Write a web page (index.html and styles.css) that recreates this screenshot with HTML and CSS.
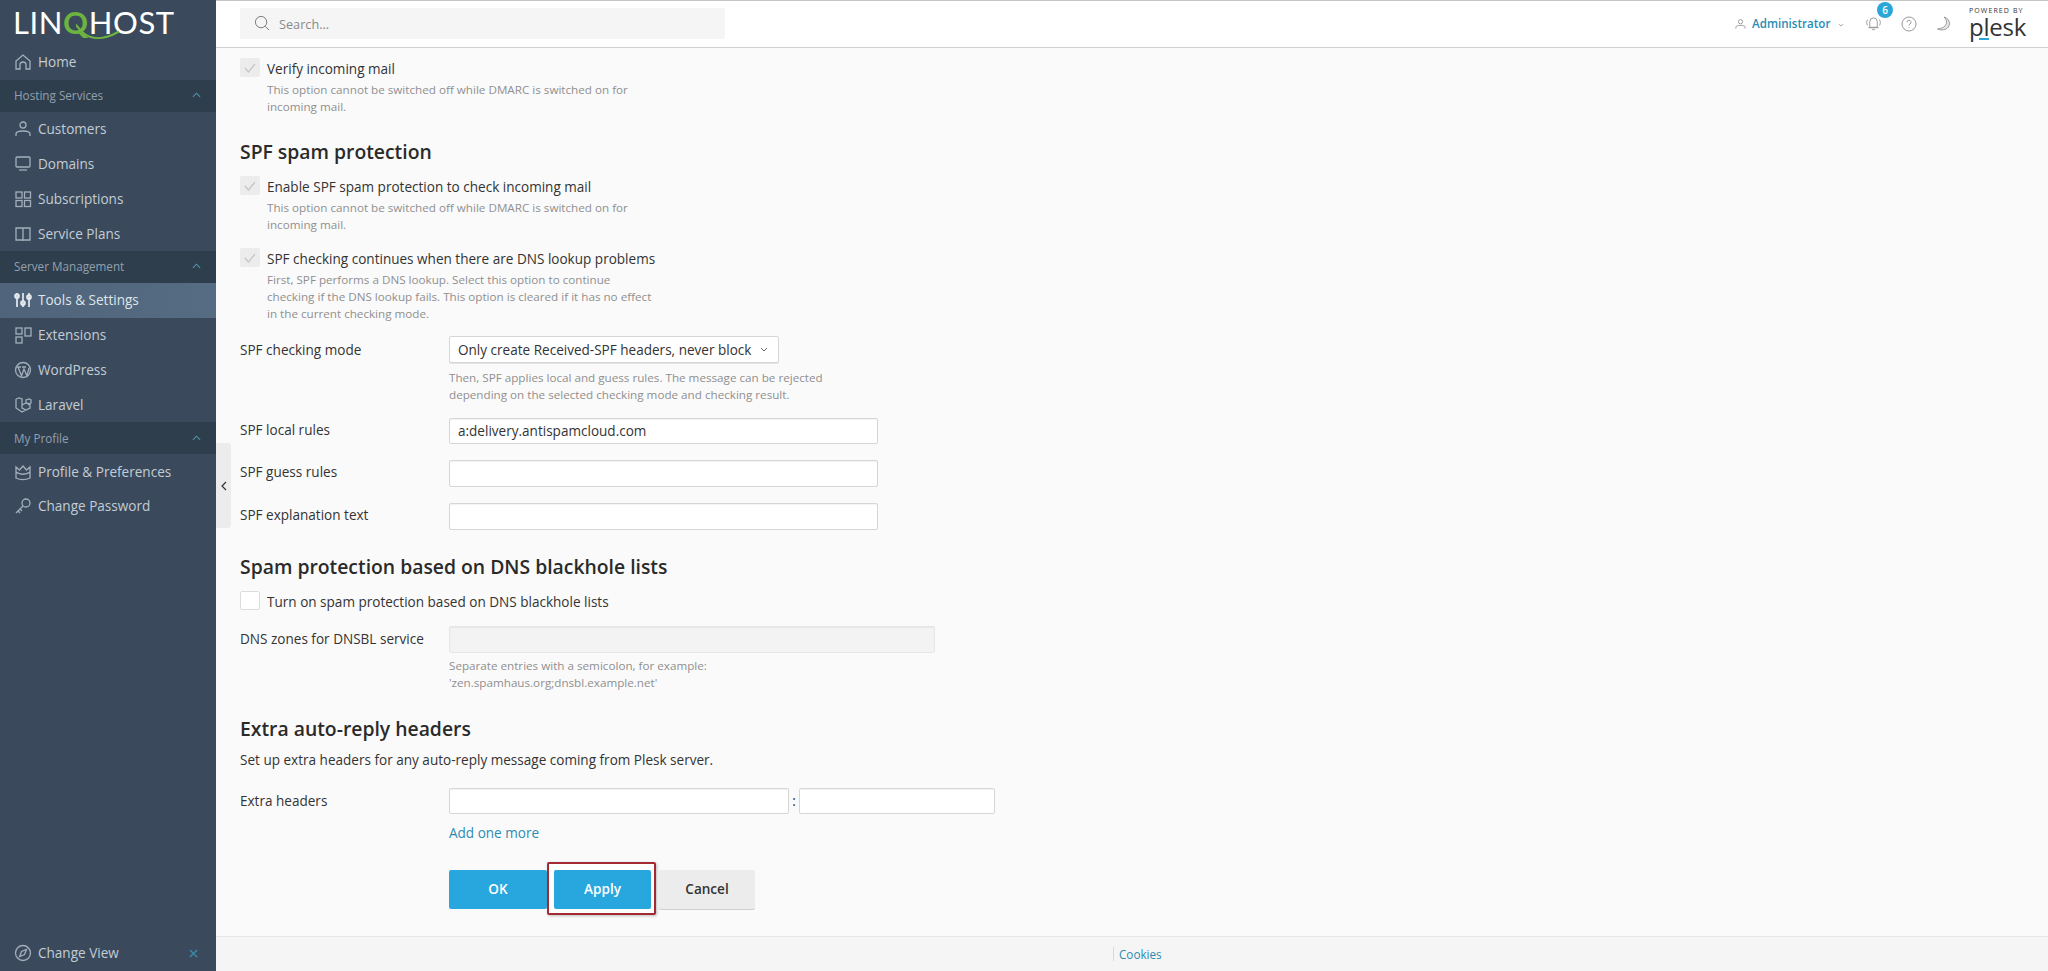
FILE: index.html
```html
<!DOCTYPE html>
<html lang="en">
<head>
<meta charset="utf-8">
<title>Mail Server Settings</title>
<link rel="stylesheet" href="styles.css">
</head>
<body>
<aside class="sidebar">
  <div class="logo">
    <span>LIN</span><span class="logo-q">Q</span><span>HOST</span>
    <svg class="logo-swoosh" viewBox="0 0 60 18" width="60" height="18"><path d="M0 2l6 7c9 8 22 8 36 0" fill="none" stroke="#6db33f" stroke-width="2.200" stroke-linecap="round"/></svg>
  </div>
  <nav class="nav">
    <a class="nav-item"><svg class="nav-icon" viewBox="0 0 18 18"><path d="M2 8l7-6 7 6v8h-4v-4a3 3 0 0 0-6 0v4H2z"/></svg>Home</a>
    <div class="nav-head">Hosting Services<svg class="nav-caret" viewBox="0 0 10 6"><path d="M1 5l4-4 4 4"/></svg></div>
    <a class="nav-item"><svg class="nav-icon" viewBox="0 0 18 18"><circle cx="9" cy="5" r="3"/><path d="M2 16v-2c0-2 3-3 7-3s7 1 7 3v2"/></svg>Customers</a>
    <a class="nav-item"><svg class="nav-icon" viewBox="0 0 18 18"><rect x="2" y="2" width="14" height="10" rx="1"/><path d="M5 15h8"/></svg>Domains</a>
    <a class="nav-item"><svg class="nav-icon" viewBox="0 0 18 18"><rect x="2" y="2" width="6" height="6"/><rect x="10.500" y="2" width="6" height="6"/><rect x="2" y="10.500" width="6" height="6"/><rect x="10.500" y="10.500" width="6" height="6"/></svg>Subscriptions</a>
    <a class="nav-item"><svg class="nav-icon" viewBox="0 0 18 18"><path d="M2 3h14v12H2zM9 3v13"/></svg>Service Plans</a>
    <div class="nav-head">Server Management<svg class="nav-caret" viewBox="0 0 10 6"><path d="M1 5l4-4 4 4"/></svg></div>
    <a class="nav-item nav-active"><svg class="nav-icon" viewBox="0 0 18 18"><path d="M3 2v14M9 2v14M15 2v14"/><circle cx="3" cy="5" r="2"/><circle cx="9" cy="12" r="2"/><circle cx="15" cy="6" r="2"/></svg>Tools &amp; Settings</a>
    <a class="nav-item"><svg class="nav-icon" viewBox="0 0 18 18"><rect x="2" y="2" width="6" height="6"/><rect x="11" y="2" width="6" height="8"/><rect x="2" y="11" width="6" height="6"/></svg>Extensions</a>
    <a class="nav-item"><svg class="nav-icon" viewBox="0 0 18 18"><circle cx="9" cy="9" r="7.500"/><path d="M4 6l3.500 9L10 8l3 7 2-8M3 6h4M8 6h4"/></svg>WordPress</a>
    <a class="nav-item"><svg class="nav-icon" viewBox="0 0 18 18"><path d="M2 3l3-1 3 1v9l4 2 4-2V8M8 9l4-2 4 1M12 7V4l3-1 2 1v3l-3 2M2 3v9l6 4 4-2"/></svg>Laravel</a>
    <div class="nav-head">My Profile<svg class="nav-caret" viewBox="0 0 10 6"><path d="M1 5l4-4 4 4"/></svg></div>
    <a class="nav-item"><svg class="nav-icon" viewBox="0 0 18 18"><path d="M2 4l3.500 3L9 3l3.500 4L16 4v11c-4 2-10 2-14 0zM2 9c4 3 10 3 14 0"/></svg>Profile &amp; Preferences</a>
    <a class="nav-item"><svg class="nav-icon" viewBox="0 0 18 18"><circle cx="12" cy="6" r="4"/><path d="M9 9l-7 7M4 14l2 2M6 12l2 2"/></svg>Change Password</a>
  </nav>
  <a class="nav-item nav-foot"><svg class="nav-icon" viewBox="0 0 18 18"><circle cx="9" cy="9" r="7.500"/><path d="M12.500 5.500L10.500 10.500 5.500 12.500 7.500 7.500z"/></svg>Change View<svg class="nav-close" viewBox="0 0 10 10"><path d="M1 1l8 8M9 1l-8 8"/></svg></a>
</aside>
<div class="main">
  <header class="topbar">
    <div class="search">
      <svg class="search-icon" viewBox="0 0 18 18"><circle cx="7.500" cy="7.500" r="6"/><path d="M12 12l4 4"/></svg>
      <span>Search...</span>
    </div>
    <div class="top-right">
      <svg class="user-icon" viewBox="0 0 12 12"><circle cx="6" cy="3.500" r="2.300"/><path d="M1 11V9.500C1 8 3 7.500 6 7.500s5 .5 5 2V11"/></svg>
      <a class="admin">Administrator</a>
      <svg class="admin-caret" viewBox="0 0 8 5"><path d="M1 1l3 3 3-3"/></svg>
      <div class="bell">
        <svg viewBox="0 0 18 16"><path d="M5 12V6a4 4 0 0 1 8 0v6zM3.500 12.500h11M7.500 14.500h3M2.500 4c-1 2-1 4 0 6M15.500 4c1 2 1 4 0 6"/></svg>
        <span class="badge">6</span>
      </div>
      <svg class="help" viewBox="0 0 16 16"><circle cx="8" cy="8" r="7"/><path d="M6 6.300a2 2 0 1 1 3 1.700c-.7.400-1 .8-1 1.500M8 11.300v.8"/></svg>
      <svg class="moon" viewBox="0 0 14 15"><path d="M8 1C12.500 5 11.500 12 1.500 13 7 15.500 13.500 13 13.500 7.500 13.500 4 11 2 8 1z"/></svg>
      <div class="plesk">
        <span class="plesk-by">POWERED BY</span>
        <span class="plesk-name">plesk</span>
      </div>
    </div>
  </header>
  <main class="content">
    <button class="collapse" type="button"><svg viewBox="0 0 6 10"><path d="M5 1L1 5l4 4"/></svg></button>
    <label class="check first"><span class="box on"><svg viewBox="0 0 12 10"><path d="M1 5l3.500 4L11 1"/></svg></span>Verify incoming mail</label>
    <p class="hint hint-check">This option cannot be switched off while DMARC is switched on for<br>incoming mail.</p>
    <h2 class="h h-spf">SPF spam protection</h2>
    <label class="check c-enable"><span class="box on"><svg viewBox="0 0 12 10"><path d="M1 5l3.500 4L11 1"/></svg></span>Enable SPF spam protection to check incoming mail</label>
    <p class="hint hint-check">This option cannot be switched off while DMARC is switched on for<br>incoming mail.</p>
    <label class="check c-continue"><span class="box on"><svg viewBox="0 0 12 10"><path d="M1 5l3.500 4L11 1"/></svg></span>SPF checking continues when there are DNS lookup problems</label>
    <p class="hint hint-check">First, SPF performs a DNS lookup. Select this option to continue<br>checking if the DNS lookup fails. This option is cleared if it has no effect<br>in the current checking mode.</p>
    <div class="row r-mode">
      <span class="lab">SPF checking mode</span>
      <div class="select">Only create Received-SPF headers, never block<svg viewBox="0 0 8 5"><path d="M1 1l3 3 3-3"/></svg></div>
    </div>
    <p class="hint hint-field">Then, SPF applies local and guess rules. The message can be rejected<br>depending on the selected checking mode and checking result.</p>
    <div class="row r-local"><span class="lab">SPF local rules</span><div class="input w-430">a:delivery.antispamcloud.com</div></div>
    <div class="row r-next"><span class="lab">SPF guess rules</span><div class="input w-430"></div></div>
    <div class="row r-next"><span class="lab">SPF explanation text</span><div class="input w-430"></div></div>
    <h2 class="h h-dns">Spam protection based on DNS blackhole lists</h2>
    <label class="check c-dns"><span class="box"></span>Turn on spam protection based on DNS blackhole lists</label>
    <div class="row r-zones"><span class="lab">DNS zones for DNSBL service</span><div class="input disabled"></div></div>
    <p class="hint hint-field hint-zones">Separate entries with a semicolon, for example:<br>'zen.spamhaus.org;dnsbl.example.net'</p>
    <h2 class="h h-extra">Extra auto-reply headers</h2>
    <p class="intro">Set up extra headers for any auto-reply message coming from Plesk server.</p>
    <div class="row r-headers">
      <span class="lab">Extra headers</span>
      <div class="input w-341"></div><span class="colon">:</span><div class="input w-195"></div>
    </div>
    <a class="add">Add one more</a>
    <div class="buttons">
      <button class="btn primary b-ok" type="button">OK</button>
      <div class="apply-wrap">
        <button class="btn primary b-apply" type="button">Apply</button>
        <span class="marker"></span>
      </div>
      <button class="btn b-cancel" type="button">Cancel</button>
    </div>
  </main>
  <footer class="footer"><a class="cookies">Cookies</a></footer>
</div>
</body>
</html>
```
FILE: styles.css
```css
* { box-sizing: border-box; }
html, body { height: 100%; }
body {
  margin: 0;
  display: flex;
  height: 971px;
  overflow: hidden;
  font-family: "Open Sans", sans-serif;
  font-size: 13.55px;
  color: #222;
  background: #fafafa;
}
.sidebar {
  width: 216px;
  flex: none;
  display: flex;
  flex-direction: column;
  background: #3a4a5c;
  color: #c4ccd5;
}
.logo {
  position: relative;
  height: 45px;
  padding: 4px 0 0 13px;
  font-family: Lato, sans-serif;
  font-size: 31px;
  line-height: 36px;
  letter-spacing: .6px;
  color: #fff;
  white-space: nowrap;
}
.logo-q { color: #6db33f; font-weight: 700; }
.logo-swoosh { position: absolute; left: 76px; top: 23px; }
.nav { flex: 1; }
.nav-item {
  display: flex;
  align-items: center;
  height: 34.8px;
  padding-left: 14px;
  font-size: 13.55px;
  white-space: nowrap;
}
.nav-icon {
  width: 18px;
  height: 18px;
  margin-right: 6px;
  flex: none;
  fill: none;
  stroke: #a3aeba;
  stroke-width: 1.300;
}
.nav-active {
  background: linear-gradient(90deg, #4f647a, #566c82);
  color: #dfe5ea;
}
.nav-active .nav-icon { stroke: #e6ebef; stroke-width: 1.700; }
.nav-head {
  display: flex;
  align-items: center;
  justify-content: space-between;
  height: 32px;
  padding: 0 15px 1px 14px;
  background: #2f3e4d;
  color: #92a0ae;
  font-size: 11.7px;
}
.nav-caret { width: 9px; height: 6px; fill: none; stroke: #4f96a8; stroke-width: 1.200; }
.nav-foot { height: 36px; margin-bottom: -2px; flex: none; position: relative; top: -2px; }
.nav-close { width: 9px; height: 9px; margin-left: auto; margin-right: 18px; fill: none; stroke: #3b8ba6; stroke-width: 1.500; }
.main { flex: 1; min-width: 0; display: flex; flex-direction: column; }
.topbar {
  height: 48px;
  flex: none;
  display: flex;
  align-items: flex-start;
  justify-content: space-between;
  background: #fff;
  border-top: 1px solid #c4c4c4;
  border-bottom: 1px solid #cfcfcf;
  padding-left: 24px;
  box-shadow: 0 1px 1px rgba(0,0,0,.04);
}
.search {
  width: 485px;
  height: 31px;
  margin-top: 7px;
  padding-left: 14px;
  display: flex;
  align-items: center;
  background: #f5f5f5;
  border-radius: 2px;
  color: #8a8a8a;
  font-size: 12.7px;
}
.search-icon { width: 17px; height: 17px; margin-right: 8px; fill: none; stroke: #777; stroke-width: 1; }
.top-right { display: flex; align-items: flex-start; height: 46px; position: relative; }
.user-icon { width: 11px; height: 12px; margin: 17px 6px 0 0; fill: none; stroke: #8c8c8c; stroke-width: .9; }
.admin { margin-top: 14px; color: #2b8cb3; font-size: 11.6px; font-weight: 600; line-height: 18px; width: 78px; white-space: nowrap; }
.admin-caret { width: 6px; height: 4px; margin: 22px 0 0 8px; fill: none; stroke: #8c8c8c; }
.bell { position: relative; margin: 15px 0 0 21px; width: 17px; height: 16px; }
.bell svg { width: 17px; height: 15px; fill: none; stroke: #8c8c8c; stroke-width: .9; display: block; }
.badge {
  position: absolute;
  left: 12px;
  top: -14px;
  width: 16px;
  height: 16px;
  border-radius: 50%;
  background: #28a7d8;
  color: #fff;
  font-size: 10px;
  font-weight: 600;
  line-height: 16px;
  text-align: center;
}
.help { width: 16px; height: 16px; margin: 15px 0 0 19px; fill: none; stroke: #8c8c8c; stroke-width: .9; }
.moon { width: 14px; height: 15px; margin: 15px 0 0 19px; fill: #e6e6e6; stroke: #777; stroke-width: .7; }
.plesk { position: relative; width: 56px; margin: 5px 23px 0 19px; height: 36px; color: #333; }
.plesk-by { display: block; font-size: 7px; line-height: 9px; letter-spacing: 1.100px; white-space: nowrap; }
.plesk-name { display: block; font-size: 24px; line-height: 24px; font-weight: 400; color: #333; letter-spacing: -.2px; }
.plesk::after { content: ""; position: absolute; left: 10px; top: 32px; width: 10px; height: 2px; background: #28a7d8; }
.content {
  position: relative;
  flex: 1;
  min-height: 0;
  padding: 10px 0 0 24px;
  background: #fafafa;
}
.collapse {
  position: absolute;
  left: 0;
  top: 395px;
  width: 15px;
  height: 85px;
  border: 0;
  padding: 0;
  background: #ececec;
  border-radius: 0 3px 3px 0;
  display: flex;
  align-items: center;
  justify-content: center;
}
.collapse svg { width: 6px; height: 10px; fill: none; stroke: #333; stroke-width: 1.200; }
.check { display: flex; align-items: flex-start; height: 20px; font-size: 13.55px; line-height: 22px; color: #333; white-space: nowrap; }
.box {
  width: 20px;
  height: 19px;
  margin-right: 7px;
  background: #fff;
  border: 1px solid #dcdcdc;
  border-radius: 2px;
  flex: none;
  display: flex;
  align-items: center;
  justify-content: center;
}
.box.on { background: #ececec; border-color: #ececec; }
.box svg { width: 12px; height: 10px; fill: none; stroke: #c6c6c6; stroke-width: 1.300; }
.hint { margin: 3px 0 0 27px; font-size: 11.67px; line-height: 17px; color: #8f8f8f; white-space: nowrap; }
.h { margin: 0; font-size: 19.35px; line-height: 26px; font-weight: 600; color: #2a2a2a; white-space: nowrap; }
.h-spf { margin-top: 24px; }
.c-enable { margin-top: 11px; }
.c-continue { margin-top: 15px; }
.row { display: flex; align-items: flex-start; }
.lab { width: 209px; flex: none; font-size: 13.55px; line-height: 24px; color: #333; white-space: nowrap; }
.r-mode .lab { line-height: 28px; }
.r-zones .lab, .r-headers .lab { line-height: 26px; }
.r-mode { margin-top: 14px; }
.select {
  width: 330px;
  height: 27px;
  padding: 0 10px 0 8px;
  background: #fff;
  border: 1px solid #d6d6d6;
  border-radius: 2px;
  box-shadow: 0 1px 0 #e4e4e4;
  display: flex;
  align-items: center;
  justify-content: space-between;
  font-size: 13.55px;
  color: #333;
  white-space: nowrap;
}
.select svg { width: 8px; height: 5px; fill: none; stroke: #666; }
.hint-field { margin: 5px 0 0 209px; }
.input {
  height: 26.7px;
  padding: 0 8px;
  background: #fff;
  border: 1px solid #d6d6d6;
  border-radius: 2px;
  box-shadow: inset 0 1px 1px rgba(0,0,0,.05);
  font-size: 13.55px;
  line-height: 25px;
  color: #333;
}
.w-430 { width: 429px; }
.w-341 { width: 340px; }
.w-195 { width: 196px; }
.disabled { width: 486px; background: #f3f3f3; border-color: #e6e6e6; }
.r-local { margin-top: 14.5px; }
.r-next { margin-top: 16px; }
.h-dns { margin-top: 24.5px; }
.c-dns { margin-top: 11px; }
.r-zones { margin-top: 15px; }
.hint-zones { margin-top: 4px; }
.h-extra { margin-top: 25px; }
.intro { margin: 9px 0 0; font-size: 13.55px; line-height: 18px; color: #333; white-space: nowrap; }
.r-headers { margin-top: 19px; }
.colon { width: 10px; text-align: center; font-size: 13.55px; line-height: 27px; color: #333; }
.add { display: block; margin: 9px 0 0 209px; font-size: 13.55px; line-height: 18px; color: #2b8cb3; }
.buttons { display: flex; margin: 28px 0 0 209px; }
.btn {
  height: 39px;
  border: 0;
  padding: 0;
  border-radius: 2px;
  font-family: inherit;
  font-size: 13.55px;
  font-weight: 600;
}
.primary { background: #28a7de; color: #fff; }
.b-ok { width: 98px; margin-right: 7px; }
.apply-wrap { position: relative; width: 97px; margin-right: 8px; }
.b-apply { width: 97px; position: relative; z-index: 1; }
.marker {
  position: absolute;
  left: -7px;
  right: -5px;
  top: -8px;
  bottom: -6px;
  background: #fff;
  border: 2px solid #a32a32;
  border-radius: 2px;
  box-shadow: 1px 1px 3px rgba(0,0,0,.25);
}
.b-cancel { width: 96px; background: #ececec; color: #333; box-shadow: 0 1px 0 #cfcfcf; }
.footer {
  height: 35px;
  flex: none;
  background: #f5f5f5;
  border-top: 1px solid #e6e6e6;
  padding-left: 897px;
  display: flex;
  align-items: center;
}
.cookies { padding-left: 5px; border-left: 1px solid #d8d8d8; font-size: 11.7px; line-height: 14px; color: #2b8cb3; }
```
